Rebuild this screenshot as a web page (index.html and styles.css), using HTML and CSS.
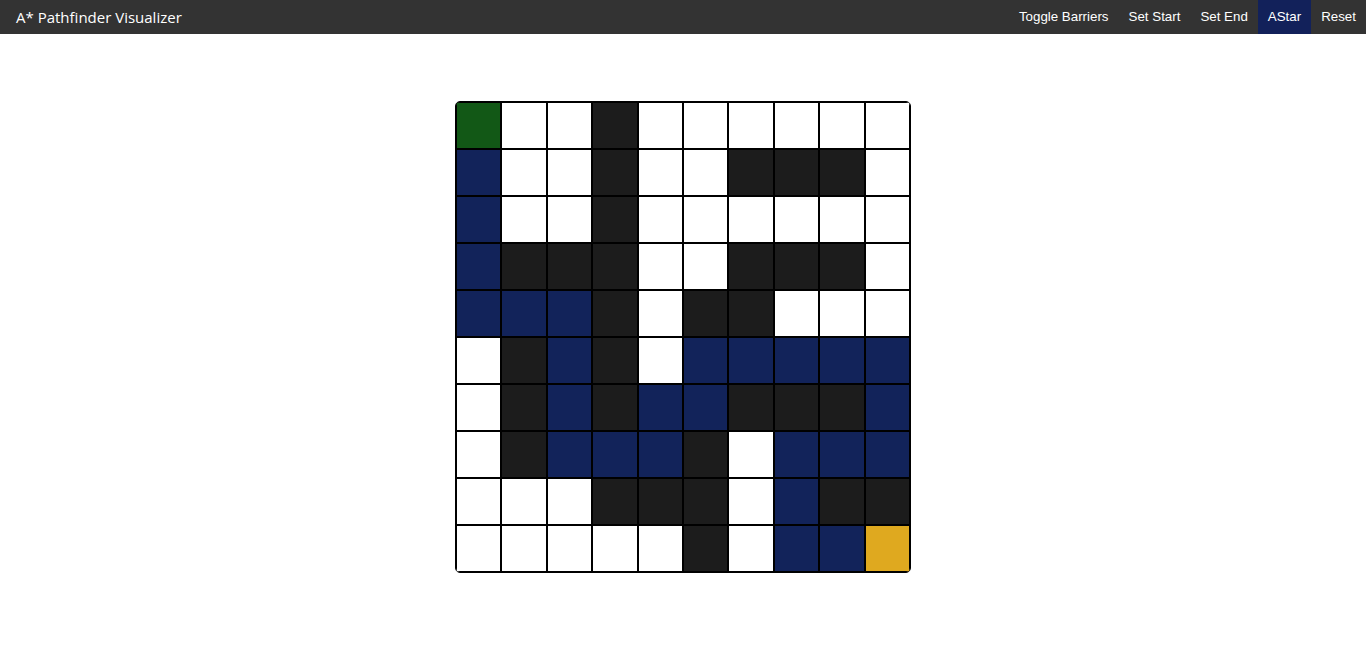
FILE: index.html
```html
<!DOCTYPE html>
<html>
<head>
<meta charset="utf-8">
<title>A* Pathfinder Visualizer</title>
<link rel="stylesheet" href="styles.css">
</head>
<body>
<nav class="navbar">
  <div class="brand">A* Pathfinder Visualizer</div>
  <div class="links">
    <a class="link">Toggle Barriers</a>
    <a class="link">Set Start</a>
    <a class="link">Set End</a>
    <a class="link active">AStar</a>
    <a class="link">Reset</a>
  </div>
</nav>
<main class="main">
  <div class="grid">
    <div class="cell s"></div><div class="cell"></div><div class="cell"></div><div class="cell b"></div><div class="cell"></div><div class="cell"></div><div class="cell"></div><div class="cell"></div><div class="cell"></div><div class="cell"></div>
    <div class="cell p"></div><div class="cell"></div><div class="cell"></div><div class="cell b"></div><div class="cell"></div><div class="cell"></div><div class="cell b"></div><div class="cell b"></div><div class="cell b"></div><div class="cell"></div>
    <div class="cell p"></div><div class="cell"></div><div class="cell"></div><div class="cell b"></div><div class="cell"></div><div class="cell"></div><div class="cell"></div><div class="cell"></div><div class="cell"></div><div class="cell"></div>
    <div class="cell p"></div><div class="cell b"></div><div class="cell b"></div><div class="cell b"></div><div class="cell"></div><div class="cell"></div><div class="cell b"></div><div class="cell b"></div><div class="cell b"></div><div class="cell"></div>
    <div class="cell p"></div><div class="cell p"></div><div class="cell p"></div><div class="cell b"></div><div class="cell"></div><div class="cell b"></div><div class="cell b"></div><div class="cell"></div><div class="cell"></div><div class="cell"></div>
    <div class="cell"></div><div class="cell b"></div><div class="cell p"></div><div class="cell b"></div><div class="cell"></div><div class="cell p"></div><div class="cell p"></div><div class="cell p"></div><div class="cell p"></div><div class="cell p"></div>
    <div class="cell"></div><div class="cell b"></div><div class="cell p"></div><div class="cell b"></div><div class="cell p"></div><div class="cell p"></div><div class="cell b"></div><div class="cell b"></div><div class="cell b"></div><div class="cell p"></div>
    <div class="cell"></div><div class="cell b"></div><div class="cell p"></div><div class="cell p"></div><div class="cell p"></div><div class="cell b"></div><div class="cell"></div><div class="cell p"></div><div class="cell p"></div><div class="cell p"></div>
    <div class="cell"></div><div class="cell"></div><div class="cell"></div><div class="cell b"></div><div class="cell b"></div><div class="cell b"></div><div class="cell"></div><div class="cell p"></div><div class="cell b"></div><div class="cell b"></div>
    <div class="cell"></div><div class="cell"></div><div class="cell"></div><div class="cell"></div><div class="cell"></div><div class="cell b"></div><div class="cell"></div><div class="cell p"></div><div class="cell p"></div><div class="cell e"></div>
  </div>
</main>
</body>
</html>
```
FILE: styles.css
```css
* { box-sizing: border-box; }
html, body { margin: 0; padding: 0; background: #fff; }
body { font-family: "Liberation Sans", Arial, sans-serif; }

.navbar {
  height: 34px;
  background: #333333;
  display: flex;
  align-items: stretch;
  justify-content: space-between;
}
.brand {
  font-family: "Open Sans", "Noto Sans", sans-serif;
  font-size: 15px;
  color: #ffffff;
  display: flex;
  align-items: center;
  padding-left: 16px;
}
.links { display: flex; align-items: stretch; }
.link {
  font-size: 13.33px;
  color: #ffffff;
  padding: 0 10px 1px;
  display: flex;
  align-items: center;
  text-decoration: none;
}
.link.active { background: #12215a; }

.main {
  display: flex;
  justify-content: center;
  padding-top: 67px;
}
.grid {
  width: 456px;
  border: 1px solid #000;
  border-radius: 5px;
  overflow: hidden;
  display: grid;
  grid-template-columns: repeat(10, 1fr);
  grid-auto-rows: 47px;
}
.cell { border: 1px solid #000; background: #ffffff; }
.cell.b { background: #1c1c1c; }
.cell.p { background: #12235a; }
.cell.s { background: #125816; }
.cell.e { background: #dfa91f; }
```
